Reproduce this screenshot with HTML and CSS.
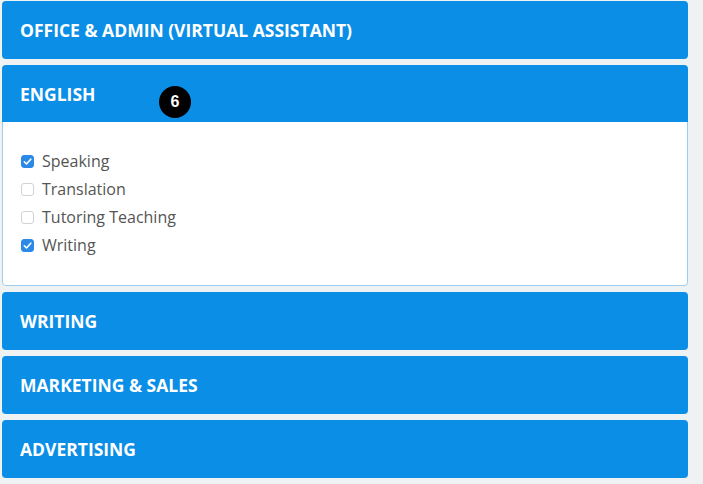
FILE: index.html
```html
<!DOCTYPE html>
<html lang="en">
<head>
    <meta charset="UTF-8">
    <title>Categories</title>
    <link rel="stylesheet" href="styles.css">
</head>
<body>

    <div class="accordion">
        <div class="panel">
            <div class="panel-heading">Office &amp; Admin (Virtual Assistant)</div>
        </div>

        <div class="panel open">
            <div class="panel-heading">
                English
                <span class="badge">6</span>
            </div>
            <div class="panel-body">
                <label class="check"><input type="checkbox" checked> Speaking</label>
                <label class="check"><input type="checkbox"> Translation</label>
                <label class="check"><input type="checkbox"> Tutoring Teaching</label>
                <label class="check"><input type="checkbox" checked> Writing</label>
            </div>
        </div>

        <div class="panel">
            <div class="panel-heading">Writing</div>
        </div>

        <div class="panel">
            <div class="panel-heading">Marketing &amp; Sales</div>
        </div>

        <div class="panel">
            <div class="panel-heading">Advertising</div>
        </div>
    </div>

</body>
</html>
```

FILE: styles.css
```css
body {
    margin: 0;
    background-color: #eef2f3;
    font-family: "Open Sans", sans-serif;
}

.accordion {
    display: flex;
    flex-direction: column;
    gap: 6px;
    width: 686px;
    padding: 1px 0 0 2px;
}

.panel {
    border-radius: 4px;
    overflow: hidden;
}

.panel-heading {
    position: relative;
    height: 58px;
    display: flex;
    align-items: center;
    padding: 0 18px;
    background-color: #0b8ee6;
    color: #fff;
    font-weight: bold;
    font-size: 17.5px;
    text-transform: uppercase;
}

.open .panel-heading {
    height: 57px;
}

.badge {
    position: absolute;
    left: 157px;
    top: 21px;
    width: 32px;
    height: 32px;
    border-radius: 50%;
    background-color: #000;
    color: #fff;
    font-family: "Liberation Sans", Arial, sans-serif;
    font-size: 16px;
    font-weight: bold;
    display: flex;
    align-items: center;
    justify-content: center;
}

.panel-body {
    background-color: #fff;
    border: 1px solid #9fcdee;
    border-top: none;
    border-radius: 0 0 4px 4px;
    height: 164px;
    box-sizing: border-box;
    padding: 25px 18px 0;
    display: flex;
    flex-direction: column;
}

.check {
    display: flex;
    align-items: center;
    height: 28px;
    color: #555;
    font-size: 16px;
}

.check input {
    -webkit-appearance: none;
    appearance: none;
    width: 13px;
    height: 13px;
    margin: 0 8px 0 0;
    border: 1px solid #d2d2d2;
    border-radius: 3px;
    background-color: #fff;
}

.check input:checked {
    border-color: #2c8ae6;
    background: #2c8ae6 url("data:image/svg+xml,%3Csvg xmlns='http://www.w3.org/2000/svg' viewBox='0 0 13 13'%3E%3Cpath d='M3.3 6.8l2.2 2.2 4.3-4.8' fill='none' stroke='%23fff' stroke-width='1.6' stroke-linecap='round' stroke-linejoin='round'/%3E%3C/svg%3E") center / 13px 13px no-repeat;
}
```
